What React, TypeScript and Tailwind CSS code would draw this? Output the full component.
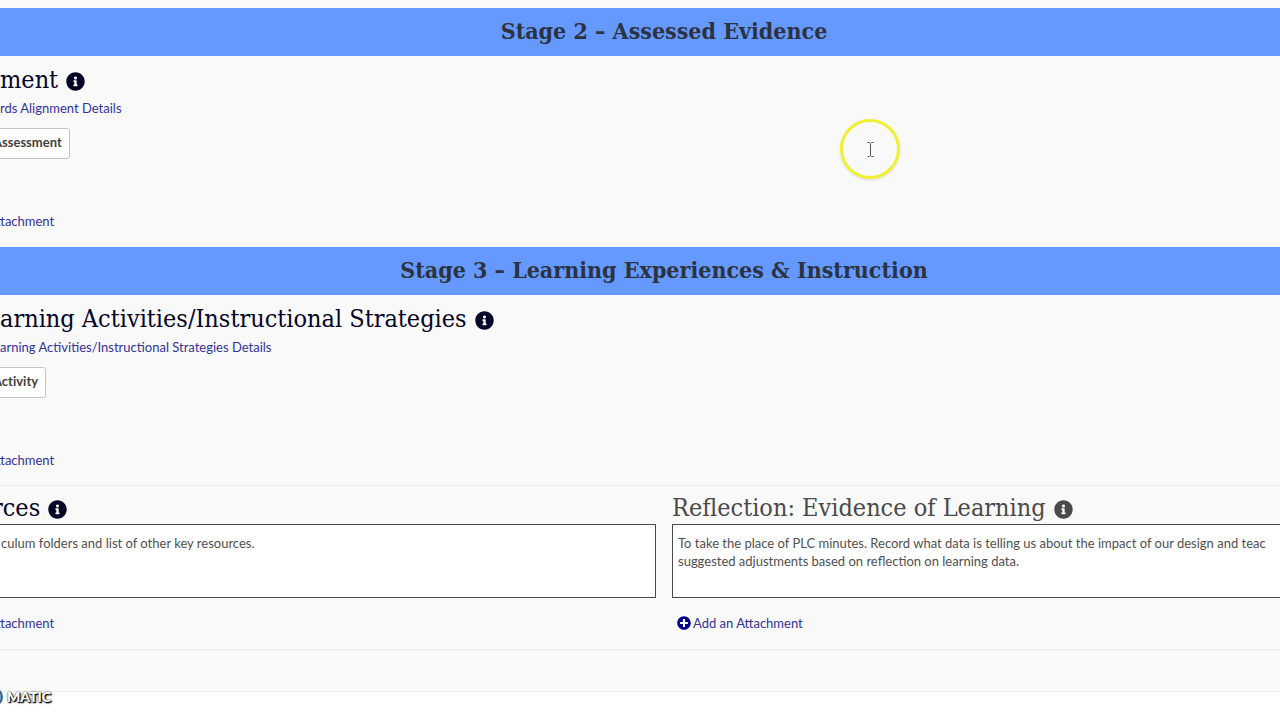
import { FaInfoCircle, FaPlusCircle } from "react-icons/fa";

function Banner({ children }: { children: string }) {
  return (
    <h1 className="flex h-12 items-center justify-center bg-[#6699ff] pb-0.5 text-[23px] font-bold text-[#2b3340] font-['DejaVu_Serif_Condensed','DejaVu_Serif',serif]">
      {children}
    </h1>
  );
}

function Heading({ children, htmlFor, muted }: { children: string; htmlFor?: string; muted?: boolean }) {
  return (
    <h2
      className={`flex h-8 items-center gap-2 text-[25px] whitespace-nowrap font-['DejaVu_Serif_Condensed','DejaVu_Serif',serif] ${
        muted ? "text-[#4a4a4a]" : "text-[#050528]"
      }`}
    >
      {htmlFor ? <label htmlFor={htmlFor}>{children}</label> : <span>{children}</span>}
      <button type="button" aria-label="Information" className="mt-[3px]">
        <FaInfoCircle size={19} />
      </button>
    </h2>
  );
}

function TextLink({ children }: { children: string }) {
  return (
    <a href="#" className="block text-[13px] leading-6 whitespace-nowrap text-[#33339a]">
      {children}
    </a>
  );
}

function Stage({ title, heading, details, action }: { title: string; heading: string; details: string; action: string }) {
  return (
    <section>
      <Banner>{title}</Banner>
      <div className="pt-2 pb-[14px]">
        <div className="pl-2">
          <Heading>{heading}</Heading>
          <TextLink>{details}</TextLink>
        </div>
        <button
          type="button"
          className="mt-2 block h-[31px] rounded-[3px] border border-[#c4c4c4] bg-white pr-[7px] pb-px text-[13px] font-bold text-[#404040] [font-variant-ligatures:none]"
        >
          {action}
        </button>
        <div className="mt-[50px] pl-1">
          <TextLink>ttachment</TextLink>
        </div>
      </div>
    </section>
  );
}

export default function App() {
  return (
    <div className="relative min-h-screen overflow-hidden bg-white font-['Lato','Liberation_Sans',sans-serif]">
      <main className="-mr-14 -ml-2 border-b border-[#eeeeee] bg-[#f9f9f9] pt-2">
        <Stage
          title="Stage 2 – Assessed Evidence"
          heading="ment"
          details="rds Alignment Details"
          action="Assessment"
        />
        <Stage
          title="Stage 3 – Learning Experiences &amp; Instruction"
          heading="arning Activities/Instructional Strategies"
          details="arning Activities/Instructional Strategies Details"
          action="Activity"
        />
        <section className="-mt-px grid grid-cols-2 gap-4 border-y border-[#e9e9e9] pt-[6px] pb-[14px]">
          <div>
            <Heading htmlFor="resources">rces</Heading>
            <textarea
              id="resources"
              className="block h-[74px] w-full resize-none border border-[#4a4a4a] bg-white py-[9px] pr-1 pl-2 text-[13px] leading-[18px] text-[#505050]"
              defaultValue="culum folders and list of other key resources."
            />
            <div className="mt-[13px] pl-1">
              <TextLink>ttachment</TextLink>
            </div>
          </div>
          <div>
            <Heading htmlFor="reflection" muted>
              Reflection: Evidence of Learning
            </Heading>
            <textarea
              id="reflection"
              className="block h-[74px] w-full resize-none border border-[#4a4a4a] bg-white py-[9px] pr-1 pl-[5px] text-[13px] leading-[18px] text-[#505050]"
              defaultValue={
                "To take the place of PLC minutes. Record what data is telling us about the impact of our design and teac\nsuggested adjustments based on reflection on learning data."
              }
            />
            <div className="mt-[13px] flex items-center gap-0.5 pl-[5px]">
              <FaPlusCircle size={14} className="text-[#00008b]" />
              <TextLink>Add an Attachment</TextLink>
            </div>
          </div>
        </section>
        <div className="h-[41px]" />
      </main>

      <div className="absolute top-[119px] left-[840px] flex size-[60px] items-center justify-center rounded-full border-3 border-[#f0f032] shadow-sm">
        <svg width="9" height="15" viewBox="0 0 9 15" fill="none" stroke="#555" strokeWidth="1">
          <path d="M1.5 .5h2l1 1 1-1h2M4.500 1.500v12M1.500 14.500h2l1-1 1 1h2" />
        </svg>
      </div>

      <div className="absolute top-[687px] left-0 flex items-center gap-1">
        <svg width="3" height="20" viewBox="0 0 3 20">
          <circle cx="-7" cy="10" r="9" fill="#6ba3c8" stroke="#3d6580" strokeWidth="2" />
        </svg>
        <span className="text-sm leading-5 font-black text-white [text-shadow:1px_1px_1px_#000,0_0_2px_#333,1px_1px_2px_#222]">
          MATIC
        </span>
      </div>
    </div>
  );
}
